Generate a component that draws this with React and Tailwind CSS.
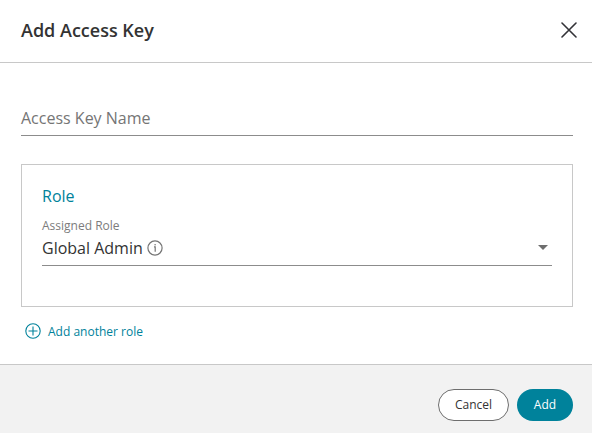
function CloseIcon() {
  return (
    <svg width="16" height="16" viewBox="0 0 16 16" fill="none" stroke="#333338" strokeWidth="1.6" strokeLinecap="round">
      <path d="M1 1L15 15M15 1L1 15" />
    </svg>
  );
}

function InfoIcon() {
  return (
    <svg width="16" height="16" viewBox="0 0 16 16" fill="none" stroke="#757575" strokeWidth="1.2">
      <circle cx="8" cy="8" r="7.1" />
      <path d="M7 6.9H8.2V11.8" />
      <circle cx="8.1" cy="4.8" r="0.8" fill="#757575" stroke="none" />
    </svg>
  );
}

function PlusCircleIcon() {
  return (
    <svg width="16" height="16" viewBox="0 0 16 16" fill="none" stroke="#00829b" strokeWidth="1.1">
      <circle cx="8" cy="8" r="7.2" />
      <path d="M8 3.5V12.5M3.5 8H12.5" />
    </svg>
  );
}

export default function App() {
  return (
    <div className="flex h-[433px] w-[592px] flex-col bg-white font-['Open_Sans','Noto_Sans',sans-serif] text-[#333333]">
      <header className="flex h-[63px] shrink-0 items-center justify-between border-b border-[#c8c8c8] pr-[15px] pb-0.5 pl-[21px]">
        <h1 className="text-[18px] leading-6 font-semibold">Add Access Key</h1>
        <button aria-label="Close">
          <CloseIcon />
        </button>
      </header>

      <main className="flex flex-1 flex-col px-[21px] pr-[19px] pt-[43px]">
        <div className="h-[30px] border-b border-[#8c8c8c] text-[16px] leading-6 text-[#757575]">
          Access Key Name
        </div>

        <section className="mt-7 h-[143px] border border-[#c8c8c8] px-5 pt-[19px]">
          <h2 className="text-[16px] leading-6 text-[#00829b]">Role</h2>
          <div className="mt-2.5 text-[12px] leading-4 text-[#7c7c7c]">Assigned Role</div>
          <div className="flex h-8 items-start justify-between border-b border-[#8c8c8c] pt-0.5">
            <div className="flex items-center gap-1 text-[16px] leading-6">
              Global Admin
              <InfoIcon />
            </div>
            <svg className="mt-[9px] mr-1" width="10" height="5" viewBox="0 0 10 5" fill="#6e6e6e">
              <path d="M0 0H10L5 5Z" />
            </svg>
          </div>
        </section>

        <button className="mt-[15px] flex items-center gap-[7px] self-start pl-1 text-[12px] leading-4 text-[#00829b]">
          <PlusCircleIcon />
          <span className="pt-0.5 leading-4">Add another role</span>
        </button>
      </main>

      <footer className="flex h-[69px] shrink-0 justify-end gap-2 border-t border-[#c8c8c8] bg-[#f2f2f2] pt-6 pr-[19px]">
        <button className="h-8 w-[71px] rounded-full border border-[#6e6e6e] bg-white text-[12px]">Cancel</button>
        <button className="h-8 w-14 rounded-full bg-[#00829b] text-[12px] text-white">Add</button>
      </footer>
    </div>
  );
}
